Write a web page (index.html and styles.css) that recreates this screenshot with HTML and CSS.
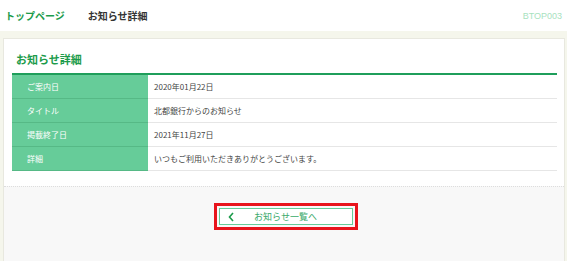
FILE: index.html
```html
<!DOCTYPE html>
<html lang="ja">
<head>
  <meta charset="UTF-8">
  <meta name="viewport" content="width=device-width, initial-scale=1.0">
  <title>お知らせ詳細</title>
  <link rel="stylesheet" href="styles.css">
</head>
<body>
  <header class="top-bar">
    <a class="top-link" href="#">トップページ</a>
    <span class="page-name">お知らせ詳細</span>
    <span class="screen-id">BTOP003</span>
  </header>

  <main class="page">
    <section class="card">
      <div class="card-body">
        <h2 class="card-title">お知らせ詳細</h2>
        <table class="detail-table">
          <tr>
            <th>ご案内日</th>
            <td>2020年01月22日</td>
          </tr>
          <tr>
            <th>タイトル</th>
            <td>北都銀行からのお知らせ</td>
          </tr>
          <tr>
            <th>掲載終了日</th>
            <td>2021年11月27日</td>
          </tr>
          <tr>
            <th>詳細</th>
            <td>いつもご利用いただきありがとうございます。</td>
          </tr>
        </table>
      </div>
      <div class="card-footer">
        <button class="back-btn" type="button">
          <svg class="chevron" width="6" height="10" viewBox="0 0 6 10">
            <polyline points="5,1 1.5,5 5,9" fill="none" stroke="#1c9b4b" stroke-width="1.6"/>
          </svg>
          <span>お知らせ一覧へ</span>
        </button>
      </div>
    </section>
  </main>
</body>
</html>
```

FILE: styles.css
```css
html, body {
  margin: 0;
  height: 100%;
}
body {
  font-family: "Noto Sans CJK JP", "Noto Sans", sans-serif;
  background-color: #f5f6ec;
  display: flex;
  flex-direction: column;
  overflow: hidden;
}
/* Header */
.top-bar {
  height: 31px;
  background-color: #ffffff;
  display: flex;
  align-items: center;
  padding: 0 5px;
  box-sizing: border-box;
  flex-shrink: 0;
}
.top-link {
  color: #1c9b4b;
  font-weight: bold;
  font-size: 10px;
  text-decoration: none;
  margin-right: 23px;
}
.page-name {
  color: #333333;
  font-weight: bold;
  font-size: 10px;
}
.screen-id {
  margin-left: auto;
  margin-right: 0;
  color: #a8e2c0;
  font-size: 9px;
  font-family: "Liberation Sans", sans-serif;
}
/* Card */
.page {
  flex: 1;
  padding: 7px 2px 0 3px;
  display: flex;
}
.card {
  flex: 1;
  background-color: #ffffff;
  border: 1px solid #e8e8df;
  border-bottom: none;
  display: flex;
  flex-direction: column;
}
.card-body {
  padding: 10px 7px 15px 8px;
}
.card-title {
  margin: 0 0 4px 4px;
  color: #1c9b4b;
  font-size: 11px;
  font-weight: bold;
  line-height: 20px;
}
.detail-table {
  width: 100%;
  border-collapse: collapse;
  border-top: 2px solid #1f9e5b;
  font-size: 8px;
}
.detail-table th,
.detail-table td {
  height: 23px;
  padding: 0 0 0 15px;
  text-align: left;
  font-weight: normal;
  border-bottom: 1px solid #e6e6e6;
}
.detail-table th {
  width: 121px;
  background-color: #66cc99;
  color: #ffffff;
  border-bottom-color: #56b986;
}
.detail-table td {
  color: #444444;
  padding-left: 6px;
}
/* Footer */
.card-footer {
  flex: 1;
  background-color: #f8f8f8;
  border-top: 1px dotted #dddddd;
  display: flex;
  justify-content: center;
  align-items: flex-start;
  padding-top: 21px;
}
.back-btn {
  width: 134px;
  height: 17px;
  background-color: #ffffff;
  border: 1px solid #66cc99;
  outline: 3px solid #e8141c;
  outline-offset: 2px;
  color: #3aa96a;
  font-family: inherit;
  font-size: 9px;
  display: flex;
  align-items: center;
  justify-content: center;
  position: relative;
  padding: 0;
  margin-left: 3px;
}
.chevron {
  position: absolute;
  left: 8px;
  top: 3px;
}
```
